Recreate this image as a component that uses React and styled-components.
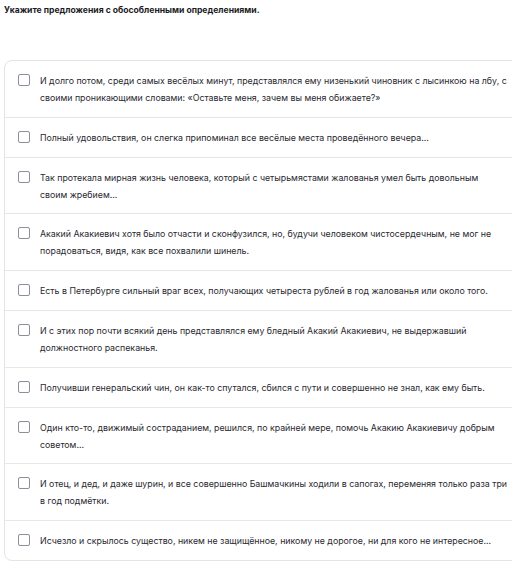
import React from "react"
import styled, { createGlobalStyle } from "styled-components"

const sentences = [
  "И долго потом, среди самых весёлых минут, представлялся ему низенький чиновник с лысинкою на лбу, с своими проникающими словами: «Оставьте меня, зачем вы меня обижаете?»",
  "Полный удовольствия, он слегка припоминал все весёлые места проведённого вечера...",
  "Так протекала мирная жизнь человека, который с четырьмястами жалованья умел быть довольным своим жребием...",
  "Акакий Акакиевич хотя было отчасти и сконфузился, но, будучи человеком чистосердечным, не мог не порадоваться, видя, как все похвалили шинель.",
  "Есть в Петербурге сильный враг всех, получающих четыреста рублей в год жалованья или около того.",
  "И с этих пор почти всякий день представлялся ему бледный Акакий Акакиевич, не выдержавший должностного распеканья.",
  "Получивши генеральский чин, он как-то спутался, сбился с пути и совершенно не знал, как ему быть.",
  "Один кто-то, движимый состраданием, решился, по крайней мере, помочь Акакию Акакиевичу добрым советом...",
  "И отец, и дед, и даже шурин, и все совершенно Башмачкины ходили в сапогах, переменяя только раза три в год подмётки.",
  "Исчезло и скрылось существо, никем не защищённое, никому не дорогое, ни для кого не интересное...",
]

const GlobalStyle = createGlobalStyle`
  body {
    margin: 0;
    background: #ffffff;
    font-family: Inter, Roboto, sans-serif;
    color: #1f1f24;
    overflow: hidden;
  }
`

const Page = styled.div`
  width: 540px;
  padding: 4px 0 0 4px;
`

const Question = styled.h3`
  margin: 0;
  font-size: 8.6px;
  line-height: 12px;
  font-weight: 700;
  color: #1b1b1f;
`

const Card = styled.div`
  margin-top: 44px;
  border: 1px solid #e3e3e8;
  border-radius: 8px;
  background: #fff;
`

const Option = styled.label`
  display: flex;
  align-items: flex-start;
  gap: 10px;
  padding: 11px 12px 10.8px 13px;
  border-top: ${p => (p.$first ? "none" : "1px solid #e6e6eb")};
  cursor: pointer;
`

const Box = styled.span`
  flex: 0 0 auto;
  width: 10px;
  height: 10px;
  margin-top: 2px;
  border: 1.5px solid #8f8e9b;
  border-radius: 2px;
  background: #fff;
`

const Text = styled.span`
  width: 467.4px;
  font-size: 8.8px;
  line-height: 17px;
  color: #2a2a30;
`

export default function App() {
  return (
    <>
      <GlobalStyle />
      <Page>
        <Question>Укажите предложения с обособленными определениями.</Question>
        <Card>
          {sentences.map((s, i) => (
            <Option key={i} $first={i === 0}>
              <Box />
              <Text>{s}</Text>
            </Option>
          ))}
        </Card>
      </Page>
    </>
  )
}
